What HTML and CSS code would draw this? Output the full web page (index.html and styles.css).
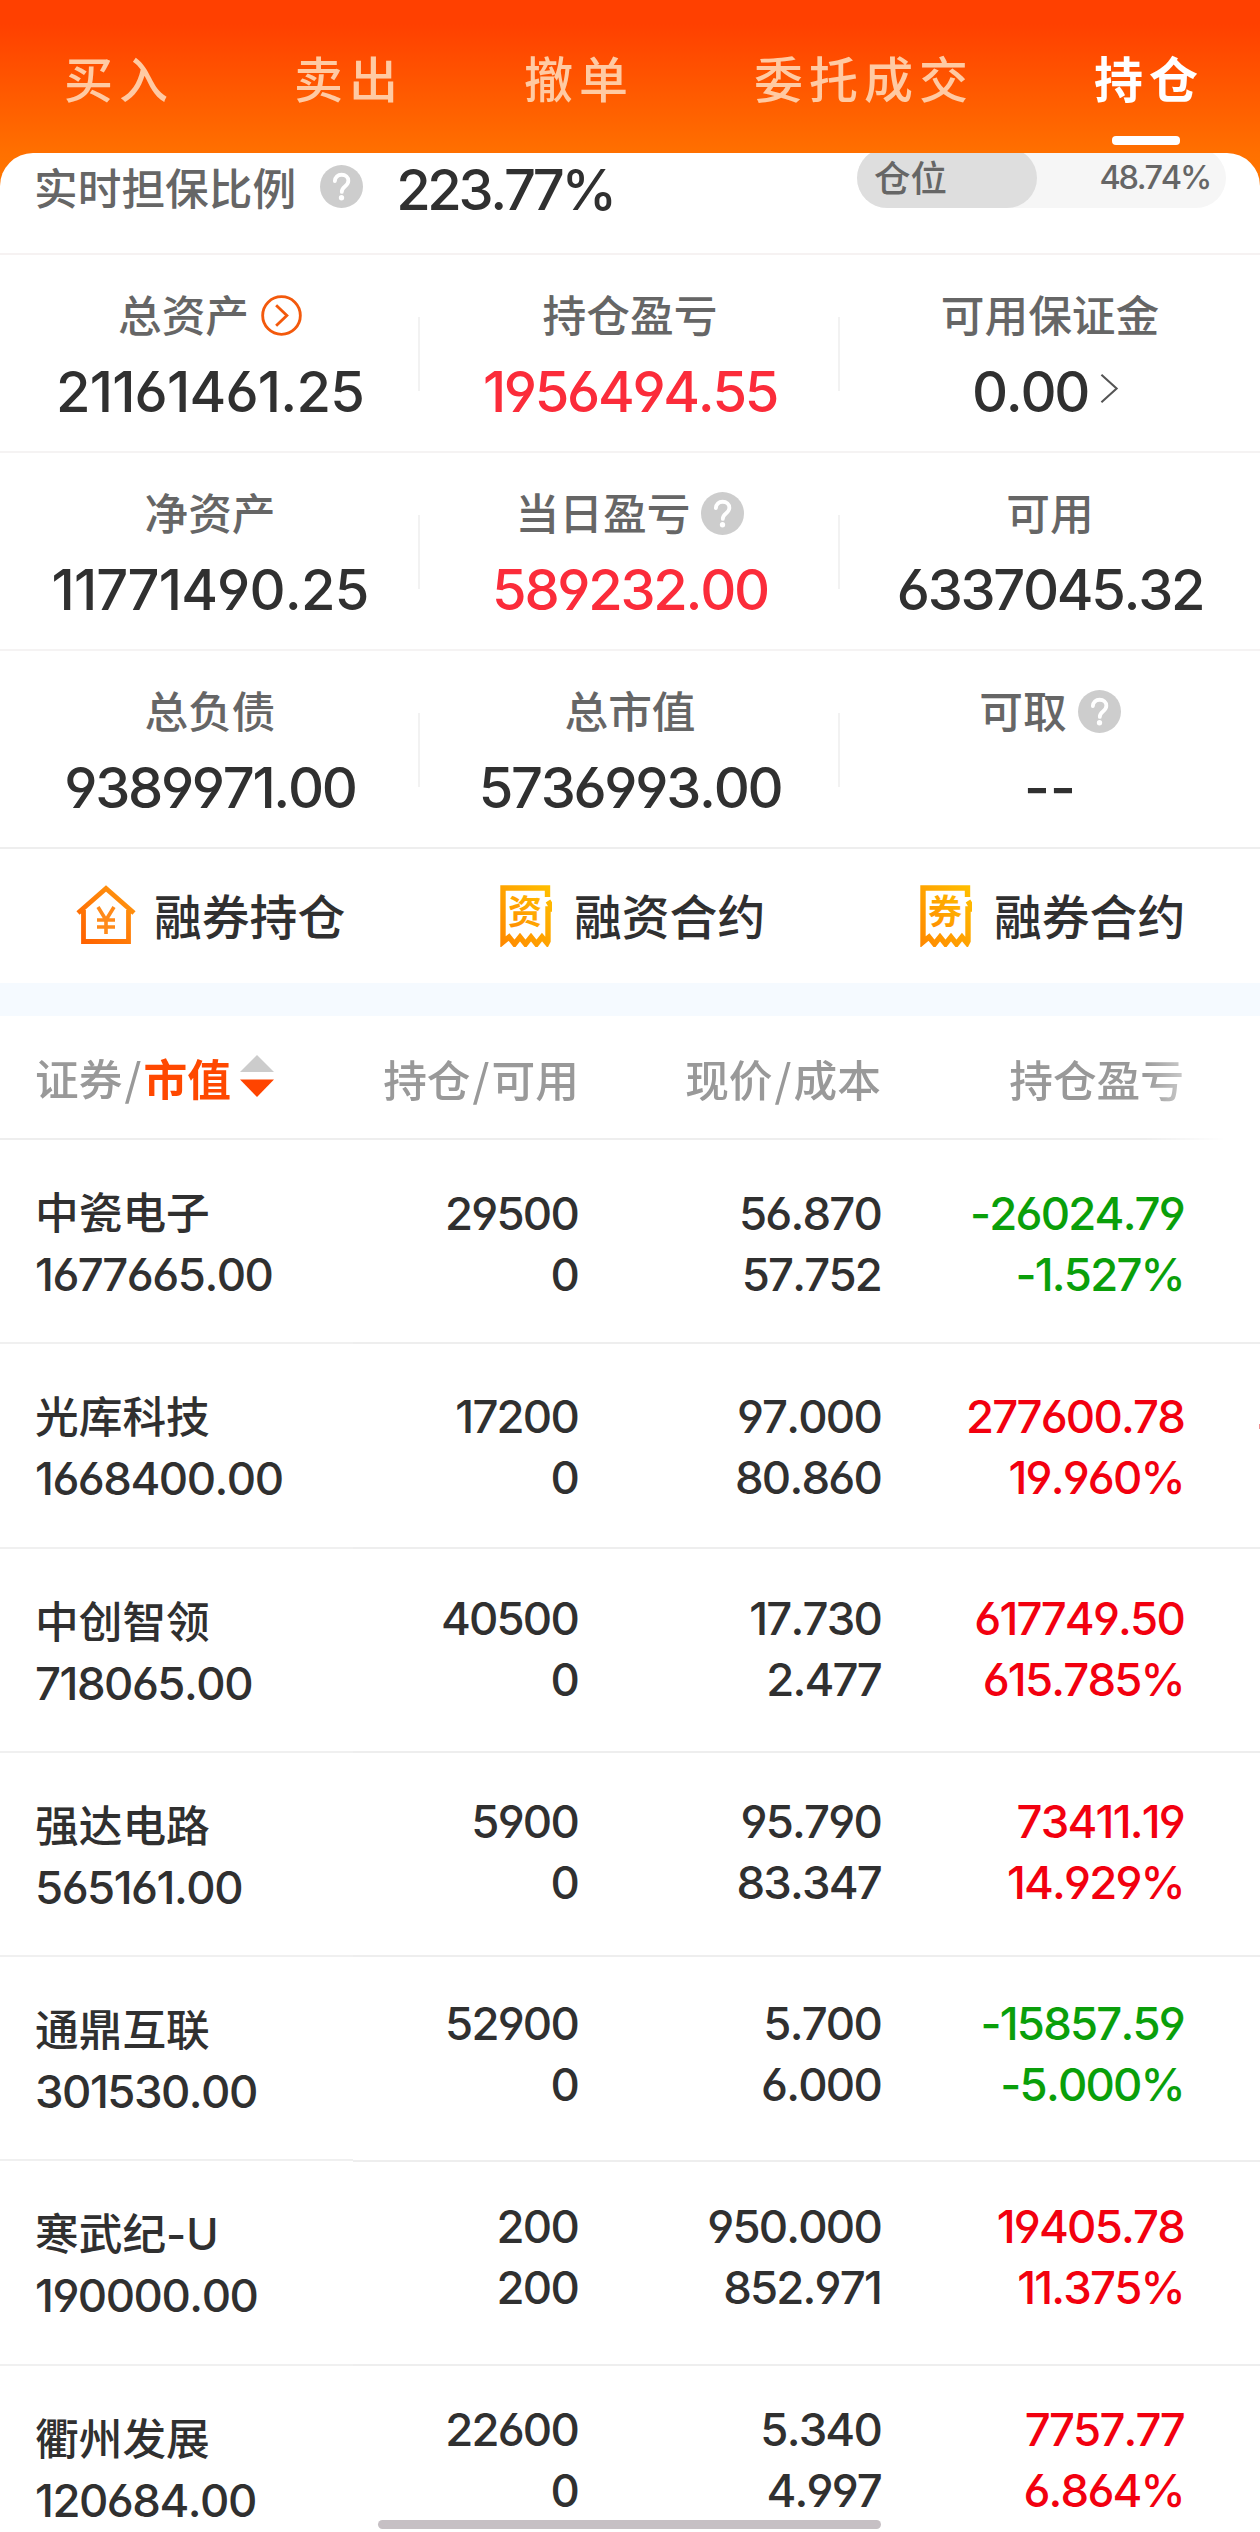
FILE: index.html
```html
<!DOCTYPE html>
<html lang="zh-CN">
<head>
<meta charset="utf-8">
<title>持仓</title>
<link rel="stylesheet" href="styles.css">
</head>
<body>
<svg class="defs" width="0" height="0" aria-hidden="true">
  <defs>
    <linearGradient id="gold" x1="0" y1="1" x2="1" y2="0"><stop offset="0" stop-color="#ff8a00"/><stop offset="1" stop-color="#ffbe00"/></linearGradient>
    <linearGradient id="amber" x1="0" y1="1" x2="1" y2="0"><stop offset="0" stop-color="#ff6000"/><stop offset="1" stop-color="#ff9a10"/></linearGradient>
    <symbol id="help" viewBox="0 0 44 44">
      <circle cx="22" cy="22" r="22" fill="#cdcdcd"/>
      <path d="M15.2 16.500c.3-4 3-6.500 6.900-6.500 4 0 6.900 2.500 6.900 6.100 0 2.700-1.500 4.200-3.500 5.800-2.200 1.800-3.200 2.900-3.200 5.600" fill="none" stroke="#fff" stroke-width="3.900" stroke-linecap="round"/>
      <circle cx="22" cy="33.500" r="2.700" fill="#fff"/>
    </symbol>
    <symbol id="receipt" viewBox="0 0 52 62">
      <path d="M47.500 12V3H3V57L9 52l5.500 7 5.500-7 5.500 7 5.500-7 5.500 7 5.500-7 5 6 1-2V24h2.500V20L48 16" fill="none" stroke="url(#gold)" stroke-width="5.400"/>
    </symbol>
  </defs>
</svg>
<div class="screen">
  <nav class="tabs">
    <span class="tab">买入</span>
    <span class="tab">卖出</span>
    <span class="tab">撤单</span>
    <span class="tab">委托成交</span>
    <span class="tab active">持仓</span>
  </nav>

  <main class="panel">
    <section class="ratio">
      <span class="label">实时担保比例</span>
      <svg class="help"><use href="#help"/></svg>
      <span class="num">223.77%</span>
      <div class="pill"><span class="pill-fill">仓位</span><span class="pill-value">48.74%</span></div>
    </section>

    <section class="stats">
      <div class="stat"><div class="label">总资产<svg class="go" viewBox="0 0 42 42"><circle cx="21" cy="21" r="19.300"/><path d="M15.500 10.500L26.500 21 15.500 31.500"/></svg></div><div class="num long">21161461.25</div></div>
      <div class="stat"><div class="label">持仓盈亏</div><div class="num red">1956494.55</div></div>
      <div class="stat"><div class="label">可用保证金</div><div class="num">0.00<svg class="chevron" viewBox="0 0 20 32"><path d="M1.500 1.500L17.500 16 1.500 30.500"/></svg></div></div>
      <div class="stat"><div class="label">净资产</div><div class="num long">11771490.25</div></div>
      <div class="stat"><div class="label">当日盈亏<svg class="help"><use href="#help"/></svg></div><div class="num red">589232.00</div></div>
      <div class="stat"><div class="label">可用</div><div class="num">6337045.32</div></div>
      <div class="stat"><div class="label">总负债</div><div class="num">9389971.00</div></div>
      <div class="stat"><div class="label">总市值</div><div class="num">5736993.00</div></div>
      <div class="stat"><div class="label">可取<svg class="help"><use href="#help"/></svg></div><div class="num dash">--</div></div>
    </section>

    <section class="actions">
      <div class="action">
        <svg class="icon-house" viewBox="0 0 60 60"><path d="M2 28L30 3.500 58 28M7.500 25V56.500H52.500V25" fill="none" stroke="url(#amber)" stroke-width="4.800"/><path d="M22 22l8 13 8-13M30 35V49M21 35H39M21 42H39" fill="none" stroke="#ff8a1a" stroke-width="3.600"/></svg>
        <span>融券持仓</span>
      </div>
      <div class="action">
        <svg class="icon-receipt" viewBox="0 0 52 62"><use href="#receipt"/><text x="25" y="39" text-anchor="middle">资</text></svg>
        <span>融资合约</span>
      </div>
      <div class="action">
        <svg class="icon-receipt" viewBox="0 0 52 62"><use href="#receipt"/><text x="25" y="39" text-anchor="middle">券</text></svg>
        <span>融券合约</span>
      </div>
    </section>

    <div class="band"></div>

    <header class="thead">
      <span class="th-name">证券<i class="slash">/</i><b>市值</b><svg class="sort" viewBox="0 0 34 42"><path d="M17 0L34 17H0z" fill="#ccc"/><path d="M0 24.500H34L17 42z" fill="#ff4400"/></svg></span>
      <span class="th">持仓<i class="slash">/</i>可用</span>
      <span class="th">现价<i class="slash">/</i>成本</span>
      <span class="th">持仓盈亏</span>
    </header>

    <section class="holdings">
      <div class="names">
        <div class="name"><span>中瓷电子</span><span>1677665.00</span></div>
        <div class="name"><span>光库科技</span><span>1668400.00</span></div>
        <div class="name"><span>中创智领</span><span>718065.00</span></div>
        <div class="name"><span>强达电路</span><span>565161.00</span></div>
        <div class="name"><span>通鼎互联</span><span>301530.00</span></div>
        <div class="name"><span>寒武纪-U</span><span>190000.00</span></div>
        <div class="name"><span>衢州发展</span><span>120684.00</span></div>
      </div>
      <div class="cells">
        <div class="row"><p>29500<br>0</p><p>56.870<br>57.752</p><p class="down">-26024.79<br>-1.527%</p></div>
        <div class="row"><p>17200<br>0</p><p>97.000<br>80.860</p><p class="up">277600.78<br>19.960%</p><i class="peek"></i></div>
        <div class="row"><p>40500<br>0</p><p>17.730<br>2.477</p><p class="up">617749.50<br>615.785%</p></div>
        <div class="row"><p>5900<br>0</p><p>95.790<br>83.347</p><p class="up">73411.19<br>14.929%</p></div>
        <div class="row"><p>52900<br>0</p><p>5.700<br>6.000</p><p class="down">-15857.59<br>-5.000%</p></div>
        <div class="row"><p>200<br>200</p><p>950.000<br>852.971</p><p class="up">19405.78<br>11.375%</p></div>
        <div class="row"><p>22600<br>0</p><p>5.340<br>4.997</p><p class="up">7757.77<br>6.864%</p></div>
      </div>
    </section>
  </main>
  <div class="home-bar"></div>
</div>
</body>
</html>
```
FILE: styles.css
```css
* { box-sizing: border-box; }
body {
  margin: 0;
  background: #fff;
  color: #303030;
  font-family: Inter, "Noto Sans CJK SC", sans-serif;
  font-weight: 450;
  font-kerning: none;
  font-feature-settings: "cv03", "cv04", "calt" 0;
}
.defs { display: block; height: 0; }
.screen {
  position: relative;
  width: 1260px;
  height: 2532px;
  overflow: hidden;
  background: linear-gradient(#ff4000 0, #ff4000 24px, #ff7000 153px, #ff7800 190px);
}

/* Tabs */
.tabs {
  height: 153px;
  padding: 0 56px 0 64px;
  display: flex;
  justify-content: space-between;
  font-size: 49px;
  letter-spacing: 6px;
  line-height: 162px;
  color: #ffcaa3;
}
.tab { position: relative; white-space: nowrap; }
.tab.active { color: #fff; font-weight: 700; }
.tab.active::after {
  content: "";
  position: absolute;
  left: 50%;
  margin-left: -37px;
  top: 136px;
  width: 68px;
  height: 9px;
  border-radius: 4px;
  background: #fff;
}

.panel {
  height: 2379px;
  background: #fff;
  border-radius: 33px 33px 0 0;
  overflow: hidden;
}
.label { font-size: 43.700px; line-height: 62px; color: #666; }
.num { font-size: 56px; line-height: 70px; letter-spacing: -2px; }
.red { color: #fb2c3a; }
.help { width: 43px; height: 43px; }

/* Collateral ratio */
.ratio {
  height: 102px;
  padding: 0 34px 26px 34px;
  display: flex;
  align-items: center;
  border-bottom: 2px solid #f6f2f2;
}
.ratio .help { margin: 0 33px 8px 24px; }
.ratio .num { letter-spacing: -3.300px; }
.pill {
  width: 369px;
  height: 60px;
  margin: -25px 0 0 auto;
  border-radius: 30px;
  background: #f6f6f6;
  display: flex;
  justify-content: space-between;
  align-items: center;
  color: #666;
}
.pill-fill {
  width: 180px;
  height: 60px;
  padding-left: 17px;
  border-radius: 30px;
  background: #dedede;
  font-size: 36.500px;
  line-height: 63px;
}
.pill-value { padding-right: 16px; font-size: 32.500px; line-height: 67px; letter-spacing: -2.200px; }

/* Account figures */
.stats { display: grid; grid-template-columns: repeat(3, 420px); grid-auto-rows: 198px; }
.stat {
  padding-top: 31px;
  border-bottom: 2px solid #f5f3f3;
  background: linear-gradient(#f2f2f2, #f2f2f2) right 62px / 2px 74px no-repeat;
}
.stat:nth-child(3n) { background: none; }
.stat:nth-child(n+7) { border-bottom-color: #eee; }
.stat .label, .stat .num { display: flex; justify-content: center; align-items: center; }
.stat .num { margin-top: 9px; letter-spacing: -2.300px; }
.stat .long { letter-spacing: -.8px; }
.stat .label .help { margin: 0 0 4px 11px; }
.go { width: 41px; height: 41px; margin: 0 0 3px 12px; fill: none; stroke: #f3590c; stroke-width: 2.900; }
.chevron { width: 19px; height: 31px; margin: -7px 9px 0 12px; fill: none; stroke: #555; stroke-width: 2.200; }
.stat .dash { letter-spacing: 0; }

/* Shortcuts */
.actions { display: grid; grid-template-columns: repeat(3, 420px); height: 134px; }
.action { display: flex; align-items: center; padding-left: 76px; font-size: 47.800px; line-height: 70px; }
.action span { padding-top: 4px; }
.icon-house { width: 60px; height: 60px; margin: -3px 18px 0 0; }
.icon-receipt { width: 52px; height: 62px; margin: -1px 22px 0 4px; fill: url(#gold); font-size: 34px; font-weight: 700; }
.band { height: 33px; background: #f5faff; }

/* Table heading */
.thead {
  height: 124px;
  display: grid;
  grid-template-columns: 277px 302px 302px 303px;
  align-items: center;
  color: #999;
  font-family: "Noto Sans CJK SC", sans-serif;
  font-size: 43.700px;
  line-height: 60px;
  border-bottom: 2px solid #eee;
  -webkit-mask-image: linear-gradient(90deg, #000 1145px, transparent 1225px);
  mask-image: linear-gradient(90deg, #000 1145px, transparent 1225px);
}
.th-name { padding-left: 35px; display: flex; align-items: center; white-space: nowrap; }
.th-name b { font-weight: 700; color: #ff4800; }
.slash { font-style: normal; padding: 0 2px; }
.th { text-align: right; padding-top: 1px; }
.sort { width: 34px; height: 42px; margin: 0 0 3px 9px; }

.holdings { display: grid; grid-template-columns: 353px 1fr; font-size: 45.500px; line-height: 61px; letter-spacing: -1.500px; }
.name {
  height: 204.300px;
  padding: 43px 0 0 35px;
  display: flex;
  flex-direction: column;
  white-space: nowrap;
  border-bottom: 2px solid #f0f0f0;
}
.name span:first-child { font-size: 43.700px; letter-spacing: 0; }
.cells {
  position: relative;
  letter-spacing: -1.800px;
  background: repeating-linear-gradient(#fff 0, #fff 202.300px, #eee 202.300px, #eee 204.300px);
}
.row {
  position: relative;
  height: 202.600px;
  padding-top: 43px;
  display: grid;
  grid-template-columns: 225px 303px 303px 1fr;
}
.row p { margin: 0; text-align: right; }
.up { color: #f2000f; }
.down { color: #0a9f0a; }
.peek { position: absolute; right: 0; top: 81px; width: 1px; height: 5px; background: #f09090; }

.home-bar {
  position: absolute;
  left: 378px;
  top: 2520px;
  width: 503px;
  height: 9px;
  border-radius: 5px;
  background: #c6c0c4;
}
```
